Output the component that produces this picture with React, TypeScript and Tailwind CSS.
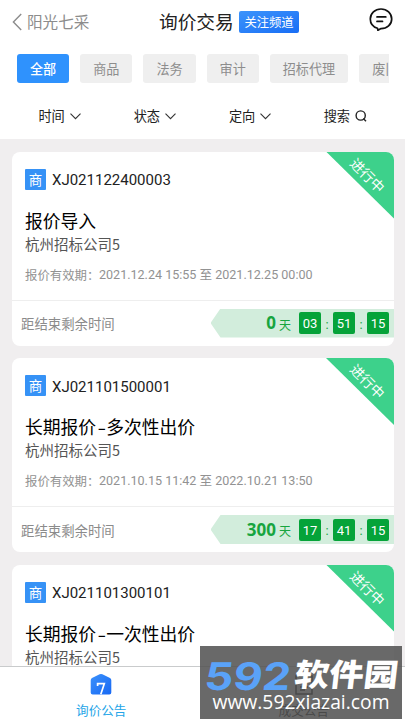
import React from "react";

type Notice = {
  code: string;
  title: string[];
  company: string;
  from: string;
  to: string;
  days: string;
  time: [string, string, string];
};

const notices: Notice[] = [
  {
    code: "XJ021122400003",
    title: ["报价导入"],
    company: "杭州招标公司5",
    from: "2021.12.24 15:55",
    to: "2021.12.25 00:00",
    days: "0",
    time: ["03", "51", "15"],
  },
  {
    code: "XJ021101500001",
    title: ["长期报价", "多次性出价"],
    company: "杭州招标公司5",
    from: "2021.10.15 11:42",
    to: "2022.10.21 13:50",
    days: "300",
    time: ["17", "41", "15"],
  },
  {
    code: "XJ021101300101",
    title: ["长期报价", "一次性出价"],
    company: "杭州招标公司5",
    from: "2021.10.13 10:20",
    to: "2022.10.21 13:50",
    days: "300",
    time: ["17", "41", "15"],
  },
];

const categories = ["全部", "商品", "法务", "审计", "招标代理", "废旧物资"];
const filters = ["时间", "状态", "定向"];

function Header() {
  return (
    <header className="flex h-[43px] shrink-0 items-center pl-3 pr-[12px]">
      <div className="flex w-[147px] items-center gap-[5px] text-[#8c8c8c]">
        <svg className="h-[18px] w-[10px]" viewBox="0 0 10 18" fill="none" stroke="currentColor" strokeWidth="1.4">
          <path d="M9.2 1 1.4 9l7.8 8" />
        </svg>
        <span className="-mt-px text-[15.6px] leading-[22px]">阳光七采</span>
      </div>
      <h1 className="-mt-px w-[76px] whitespace-nowrap text-[18.7px] leading-[26px] text-[#222]">询价交易</h1>
      <button className="ml-[4px] mt-px h-[22px] w-[60px] rounded-[2px] bg-linear-to-br from-[#3d94fb] to-[#186df5] text-[12.3px] leading-[22px] text-white">
        关注频道
      </button>
      <svg className="-mt-[5px] ml-auto h-[24px] w-[24px]" viewBox="0 0 24 24" fill="none" stroke="#111" strokeWidth="1.7" strokeLinecap="round" strokeLinejoin="round">
        <path d="M8.5 21.2C4.300 19.900 1.300 16.300 1.300 11.900 1.300 6.400 6 2 12 2s10.700 4.400 10.700 9.900S18 21.600 12 21.600L8.900 23.300Z" />
        <path d="M8 9.900h8.800M8 14.400h5.500" />
      </svg>
    </header>
  );
}

function Card({ item }: { item: Notice }) {
  return (
    <article className="relative h-[194px] shrink-0 overflow-hidden rounded-[8px] bg-white">
      <div className="h-[149px] border-b border-[#eeeeee] pl-[13px] pt-[16.5px]">
        <div className="flex h-[22px] items-center gap-[6px]">
          <span className="h-[21px] w-[21px] rounded-[1px] bg-[#3692f6] text-center text-[13.5px] leading-[21px] text-white">商</span>
          <span className="mt-[2px] font-[Roboto] text-[15px] leading-[22px] text-[#222]">{item.code}</span>
        </div>
        <h2 className="mt-[17.5px] flex text-[17.8px] leading-[24px] text-black">
          {item.title.map((part, i) => (
            <React.Fragment key={part}>
              {i > 0 && <span className="w-[10px] origin-left scale-x-140 pl-px">-</span>}
              <span>{part}</span>
            </React.Fragment>
          ))}
        </h2>
        <p className="mt-[1px] text-[14.5px] leading-[22px] text-[#555]">{item.company}</p>
        <p className="mt-[10px] flex whitespace-nowrap text-[12.4px] leading-[20px] text-[#929292]">
          <span className="w-[74px]">报价有效期：</span>
          <span className="font-[Roboto,Noto_Sans_CJK_SC] text-[12.55px]">
            {item.from} 至 {item.to}
          </span>
        </p>
      </div>
      <div className="flex h-[45px] items-center justify-between pl-[9px]">
        <span className="text-[13.4px] leading-[20px] text-[#8b8b8b]">距结束剩余时间</span>
        <div className="flex h-[29px] w-[183.5px] items-center justify-end bg-[#d2eddc] pr-[5px] text-[#17a53f] [clip-path:polygon(10px_0,100%_0,100%_100%,10px_100%,0_50%)]">
          <span className="font-[Noto_Sans] text-[17px] font-bold leading-[28px]">{item.days}</span>
          <span className="ml-[3px] mr-[8px] mt-[3px] text-[12px] leading-[20px]">天</span>
          {item.time.map((part, i) => (
            <React.Fragment key={i}>
              {i > 0 && <span className="mt-[3px] w-[12px] text-center font-[Roboto] text-[13px] leading-[20px]">:</span>}
              <span className="h-[22px] w-[22px] rounded-[2px] bg-[#05a339] text-center font-[Roboto] text-[13px] leading-[23px] text-white">
                {part}
              </span>
            </React.Fragment>
          ))}
        </div>
      </div>
      <div className="absolute right-0 top-0 h-[67px] w-[68px] bg-[#3dd18b] [clip-path:polygon(0_0,100%_0,100%_100%)]">
        <span className="absolute left-[17px] top-[13px] w-[50px] rotate-45 text-center text-[13.8px] leading-[20px] text-white">进行中</span>
      </div>
    </article>
  );
}

function BottomNav() {
  return (
    <nav className="flex h-[54px] shrink-0 border-t border-[#c9cbcc] bg-white text-[12.6px]">
      <div className="flex w-1/2 flex-col items-center pt-[6px] text-[#25a5e8]">
        <svg className="h-[23px] w-[22px]" viewBox="0 0 22 23">
          <defs>
            <linearGradient id="tab-home" x1="0" y1="0" x2="1" y2="1">
              <stop stopColor="#3c92fb" />
              <stop offset="1" stopColor="#1768f4" />
            </linearGradient>
          </defs>
          <path d="M9.600 1.300Q11 .6 12.400 1.300L20 5Q21.300 5.700 21.300 7.200V19.500Q21.300 21.500 19.300 21.500H2.700Q.7 21.500.7 19.500V7.200Q.7 5.700 2 5Z" fill="url(#tab-home)" />
          <path d="M7.600 13V10.700H14.300L10.800 21.200" fill="none" stroke="#fff" strokeWidth="1.700" />
        </svg>
        <span className="mt-[5px] leading-[18px]">询价公告</span>
      </div>
      <div className="flex w-1/2 flex-col items-center pt-[7px] text-[#222]">
        <svg className="h-[22px] w-[20px]" viewBox="0 0 20 22" fill="none" stroke="currentColor" strokeWidth="1.500">
          <path d="M2 2h16v18H2zM6 13h8M6 16h5" />
        </svg>
        <span className="mt-[5px] leading-[18px]">成交公告</span>
      </div>
    </nav>
  );
}

function SiteMark() {
  return (
    <div className="absolute left-[200px] top-[646px] h-[73px] w-[202px] overflow-hidden bg-[#505050]/86 text-white">
      <div className="absolute left-[5px] top-[12px] h-[36px] origin-left -skew-x-6 scale-x-[1.18] whitespace-nowrap font-[Inter] text-[38px] font-bold leading-[36px] text-[#5aa2f8]">
        592
      </div>
      <div className="absolute left-[95px] top-[9px] origin-center -skew-x-6 scale-y-90 whitespace-nowrap text-[34.5px] font-black leading-[36px]">软件园</div>
      <div className="absolute left-[12px] top-[44px] w-[178px] whitespace-nowrap text-center font-[Open_Sans] text-[19.300px] font-medium leading-[24px]">
        www.592xiazai.com
      </div>
    </div>
  );
}

export default function App() {
  return (
    <div className="relative flex h-[720px] w-[405px] flex-col overflow-hidden bg-[#f0eeef] font-[Noto_Sans_CJK_SC,sans-serif]">
      <section className="h-[139px] shrink-0 bg-white">
        <Header />
        <div className="ml-[17px] mr-[16px] mt-[11px] flex gap-[11px] overflow-hidden">
          {categories.map((name, i) => (
            <button
              key={name}
              className={`h-[29px] shrink-0 rounded-[3px] px-[13px] text-[13.1px] leading-[29px] ${
                i === 0 ? "bg-[#2f92fd] font-medium text-white" : "bg-[#efefef] text-[#8d8d8d]"
              }`}
            >
              {name}
            </button>
          ))}
        </div>
        <div className="mt-[22px] grid grid-cols-4 px-[12px] text-[13.2px] leading-[22px] text-[#222]">
          {filters.map((name) => (
            <div key={name} className="flex items-center justify-center gap-[5px]">
              {name}
              <svg className="h-[7px] w-[11px]" viewBox="0 0 11 7" fill="none" stroke="#333" strokeWidth="1.100">
                <path d="m.5.700 5 5 5-5" />
              </svg>
            </div>
          ))}
          <div className="flex items-center justify-center gap-[5px]">
            搜索
            <svg className="h-[12px] w-[12px]" viewBox="0 0 12 12" fill="none" stroke="#222" strokeWidth="1.400">
              <circle cx="5.700" cy="5.500" r="4.600" />
              <path d="m8.300 8.500 2.700 2.700" />
            </svg>
          </div>
        </div>
      </section>
      <main className="flex min-h-0 flex-1 flex-col gap-[12.5px] overflow-hidden pl-[12px] pr-[11px] pt-[12.5px]">
        {notices.map((item) => (
          <Card key={item.code} item={item} />
        ))}
      </main>
      <BottomNav />
      <SiteMark />
    </div>
  );
}
